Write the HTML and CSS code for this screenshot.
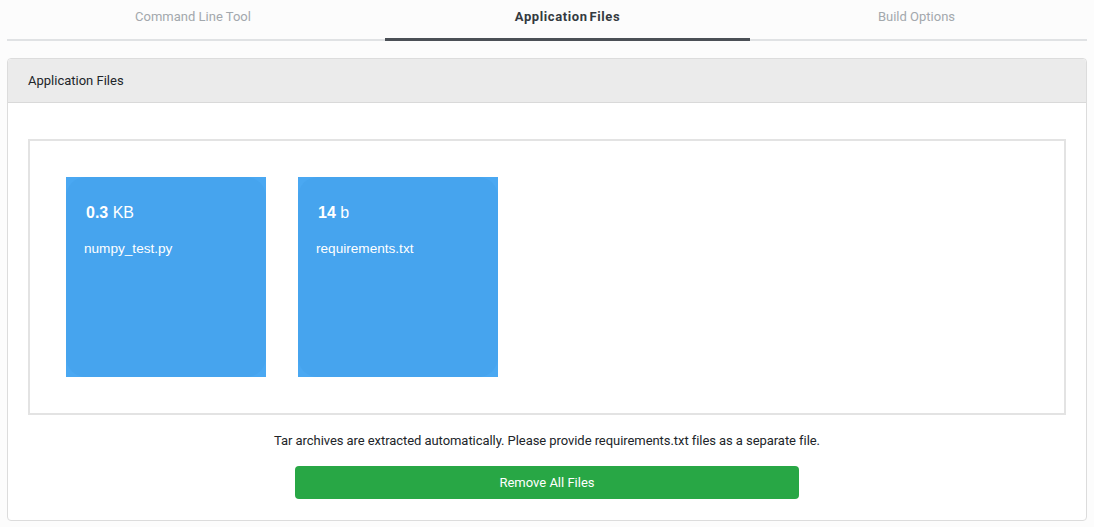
FILE: index.html
```html
<!DOCTYPE html>
<html>
<head>
<meta charset="utf-8">
<link rel="stylesheet" href="styles.css">
</head>
<body>
<div class="page">
  <nav class="tabs">
    <div class="tab tab-1">Command Line Tool</div>
    <div class="tab tab-2 active">Application Files</div>
    <div class="tab tab-3">Build Options</div>
  </nav>
  <section class="panel">
    <header class="panel-head">Application Files</header>
    <div class="panel-body">
      <div class="dropzone">
        <div class="file">
          <div class="file-inner"></div>
          <div class="file-details">
            <div class="file-size"><strong>0.3</strong> KB</div>
            <div class="file-name">numpy_test.py</div>
          </div>
        </div>
        <div class="file">
          <div class="file-inner"></div>
          <div class="file-details">
            <div class="file-size"><strong>14</strong> b</div>
            <div class="file-name">requirements.txt</div>
          </div>
        </div>
      </div>
      <p class="note">Tar archives are extracted automatically. Please provide requirements.txt files as a separate file.</p>
      <button class="btn-remove">Remove All Files</button>
    </div>
  </section>
</div>
</body>
</html>
```

FILE: styles.css
```css
html, body {
  margin: 0;
  padding: 0;
  background: #fcfcfc;
  font-family: Roboto, "Liberation Sans", sans-serif;
  color: #212529;
}
.page {
  padding: 0 7px;
}
.tabs {
  display: flex;
  height: 41px;
  border-bottom: 2px solid #e0e2e4;
  box-sizing: border-box;
}
.tab {
  display: flex;
  justify-content: center;
  padding-top: 9px;
  box-sizing: border-box;
  font-size: 13px;
  color: #a3a8ad;
  height: 41px;
}
.tab-1 { width: 378px; padding-right: 6px; }
.tab-2 { width: 365px; }
.tab-3 { flex: 1; padding-right: 4px; }
.tab.active {
  color: #343a40;
  font-weight: bold;
  letter-spacing: 0.6px;
  word-spacing: -2px;
  border-bottom: 3px solid #4b5056;
}
.panel {
  margin-top: 17px;
  border: 1px solid #dcdcdc;
  border-radius: 4px;
  background: #fff;
  height: 463px;
  box-sizing: border-box;
}
.panel-head {
  height: 44px;
  background: #ebebeb;
  border-bottom: 1px solid #d9d9d9;
  border-radius: 4px 4px 0 0;
  box-sizing: border-box;
  padding: 14px 20px 0;
  font-size: 13px;
  color: #212529;
}
.panel-body {
  padding: 36px 20px 0;
  display: flex;
  flex-direction: column;
  align-items: center;
}
.dropzone {
  align-self: stretch;
  height: 276px;
  box-sizing: border-box;
  border: 2px solid #e3e3e3;
  background: #fff;
  padding: 36px 36px;
  display: flex;
  gap: 32px;
}
.file {
  position: relative;
  width: 200px;
  height: 200px;
  background: #4aa8f2;
  color: #fff;
  font-family: Arial, "Liberation Sans", sans-serif;
}
.file-inner {
  position: absolute;
  inset: 0;
  border-radius: 20px;
  background: #46a4ee;
}
.file-details {
  position: relative;
  padding: 27px 0 0 18px;
}
.file-size {
  font-size: 16px;
  padding-left: 2px;
  height: 20px;
}
.file-size strong {
  font-weight: bold;
}
.file-name {
  margin-top: 17px;
  font-size: 13.6px;
}
.note {
  margin: 18px 0 0;
  font-size: 13px;
  letter-spacing: -0.06px;
  color: #212529;
  height: 18px;
}
.btn-remove {
  margin-top: 15px;
  width: 504px;
  height: 33px;
  border: none;
  border-radius: 4px;
  background: #28a745;
  color: #fff;
  font-family: Roboto, "Liberation Sans", sans-serif;
  font-size: 13px;
}
```
